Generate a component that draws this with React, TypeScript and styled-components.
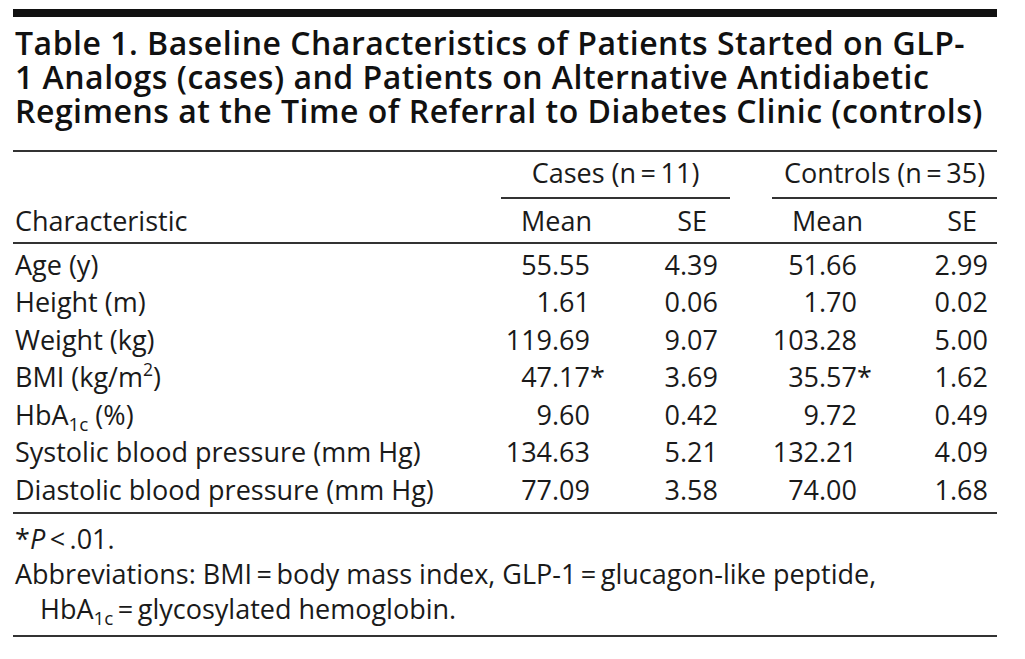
import styled, { createGlobalStyle } from "styled-components";

const GlobalStyle = createGlobalStyle`
  body {
    margin: 0;
    background: #ffffff;
    font-family: "Open Sans", "Noto Sans", sans-serif;
    color: #1a1a1a;
  }
`;

const Page = styled.div`
  width: 984px;
  padding: 9px 0 0 13px;
`;

const TopBar = styled.div`
  height: 8px;
  background: #111;
`;

const Title = styled.h1`
  margin: 9px 0 0;
  padding: 0 0 21px 2px;
  font-size: 32px;
  line-height: 34.2px;
  font-weight: 600;
  letter-spacing: 0.5px;
  color: #111;
  border-bottom: 2px solid #333;
`;

const Table = styled.table`
  width: 100%;
  border-collapse: collapse;
  font-size: 27px;
  border-bottom: 2px solid #333;

  col.label { width: 467px; }
  col.mean { width: 120px; }
  col.se { width: 130px; }
  col.cmean { width: 137px; }
  col.cse { width: 130px; }
`;

const Head = styled.thead`
  tr:last-child th {
    border-bottom: 2px solid #333;
  }
`;

const GroupCell = styled.th`
  padding: 0;
  font-weight: 400;
`;

const GroupLabel = styled.div<{ $ml: number }>`
  margin-left: ${(p) => p.$ml}px;
  padding: 2px 0 6px;
  line-height: 37px;
  text-align: center;
  border-bottom: 2px solid #333;
`;

const HeadCell = styled.th<{ $pr?: number; $left?: boolean }>`
  padding: 0 ${(p) => p.$pr ?? 0}px 0 ${(p) => (p.$left ? 2 : 0)}px;
  line-height: 43px;
  font-weight: 400;
  text-align: ${(p) => (p.$left ? "left" : "right")};
  white-space: nowrap;
`;

const Body = styled.tbody`
  tr:first-child td {
    padding-top: 7px;
  }
  tr:last-child td {
    padding-bottom: 8px;
  }
`;

const Cell = styled.td<{ $pr?: number; $left?: boolean }>`
  padding: 0 ${(p) => p.$pr ?? 0}px 9.5px ${(p) => (p.$left ? 2 : 0)}px;
  line-height: 28px;
  text-align: ${(p) => (p.$left ? "left" : "right")};
  white-space: nowrap;
`;

const Star = styled.span`
  display: inline-block;
  width: 0;
`;

const Sup = styled.sup`
  font-size: 0.65em;
  line-height: 0;
  vertical-align: 0.6em;
`;

const Sub = styled.sub`
  font-size: 0.7em;
  line-height: 0;
  vertical-align: -0.32em;
`;

const Notes = styled.div`
  padding: 7px 0 9px 2px;
  font-size: 27px;
  line-height: 35px;
  border-bottom: 2px solid #333;
`;

const Note = styled.p<{ $hang?: boolean }>`
  margin: 0;
  padding-left: ${(p) => (p.$hang ? 25 : 0)}px;
  text-indent: ${(p) => (p.$hang ? -25 : 0)}px;
`;

const Ital = styled.i`
  font-style: italic;
`;

const HbA = () => (
  <>
    HbA<Sub>1c</Sub>
  </>
);

type Row = {
  label: React.ReactNode;
  cases: [string, string];
  controls: [string, string];
  star?: boolean;
};

const rows: Row[] = [
  { label: "Age (y)", cases: ["55.55", "4.39"], controls: ["51.66", "2.99"] },
  { label: "Height (m)", cases: ["1.61", "0.06"], controls: ["1.70", "0.02"] },
  { label: "Weight (kg)", cases: ["119.69", "9.07"], controls: ["103.28", "5.00"] },
  {
    label: (
      <>
        BMI (kg/m<Sup>2</Sup>)
      </>
    ),
    cases: ["47.17", "3.69"],
    controls: ["35.57", "1.62"],
    star: true,
  },
  {
    label: (
      <>
        <HbA /> (%)
      </>
    ),
    cases: ["9.60", "0.42"],
    controls: ["9.72", "0.49"],
  },
  { label: "Systolic blood pressure (mm Hg)", cases: ["134.63", "5.21"], controls: ["132.21", "4.09"] },
  { label: "Diastolic blood pressure (mm Hg)", cases: ["77.09", "3.58"], controls: ["74.00", "1.68"] },
];

const T = "\u2009";

export default function App() {
  return (
    <>
      <GlobalStyle />
      <Page>
        <TopBar />
        <Title>
          Table 1. Baseline Characteristics of Patients Started on GLP-
          <br />
          1 Analogs (cases) and Patients on Alternative Antidiabetic
          <br />
          Regimens at the Time of Referral to Diabetes Clinic (controls)
        </Title>
        <Table>
          <colgroup>
            <col className="label" />
            <col className="mean" />
            <col className="se" />
            <col className="cmean" />
            <col className="cse" />
          </colgroup>
          <Head>
            <tr>
              <GroupCell />
              <GroupCell colSpan={2}>
                <GroupLabel $ml={21}>Cases (n{T}={T}11)</GroupLabel>
              </GroupCell>
              <GroupCell colSpan={2}>
                <GroupLabel $ml={42}>Controls (n{T}={T}35)</GroupLabel>
              </GroupCell>
            </tr>
            <tr>
              <HeadCell $left>Characteristic</HeadCell>
              <HeadCell $pr={8}>Mean</HeadCell>
              <HeadCell $pr={23}>SE</HeadCell>
              <HeadCell $pr={4}>Mean</HeadCell>
              <HeadCell $pr={20}>SE</HeadCell>
            </tr>
          </Head>
          <Body>
            {rows.map((r, i) => (
              <tr key={i}>
                <Cell $left>{r.label}</Cell>
                <Cell $pr={10}>
                  {r.cases[0]}
                  {r.star && <Star>*</Star>}
                </Cell>
                <Cell $pr={12}>{r.cases[1]}</Cell>
                <Cell $pr={10}>
                  {r.controls[0]}
                  {r.star && <Star>*</Star>}
                </Cell>
                <Cell $pr={9}>{r.controls[1]}</Cell>
              </tr>
            ))}
          </Body>
        </Table>
        <Notes>
          <Note>
            *<Ital>P</Ital>
            {T}&lt;{T}.01.
          </Note>
          <Note $hang>
            Abbreviations: BMI{T}={T}body mass index, GLP-1{T}={T}glucagon-like peptide,
            <br />
            <HbA />
            {T}={T}glycosylated hemoglobin.
          </Note>
        </Notes>
      </Page>
    </>
  );
}
